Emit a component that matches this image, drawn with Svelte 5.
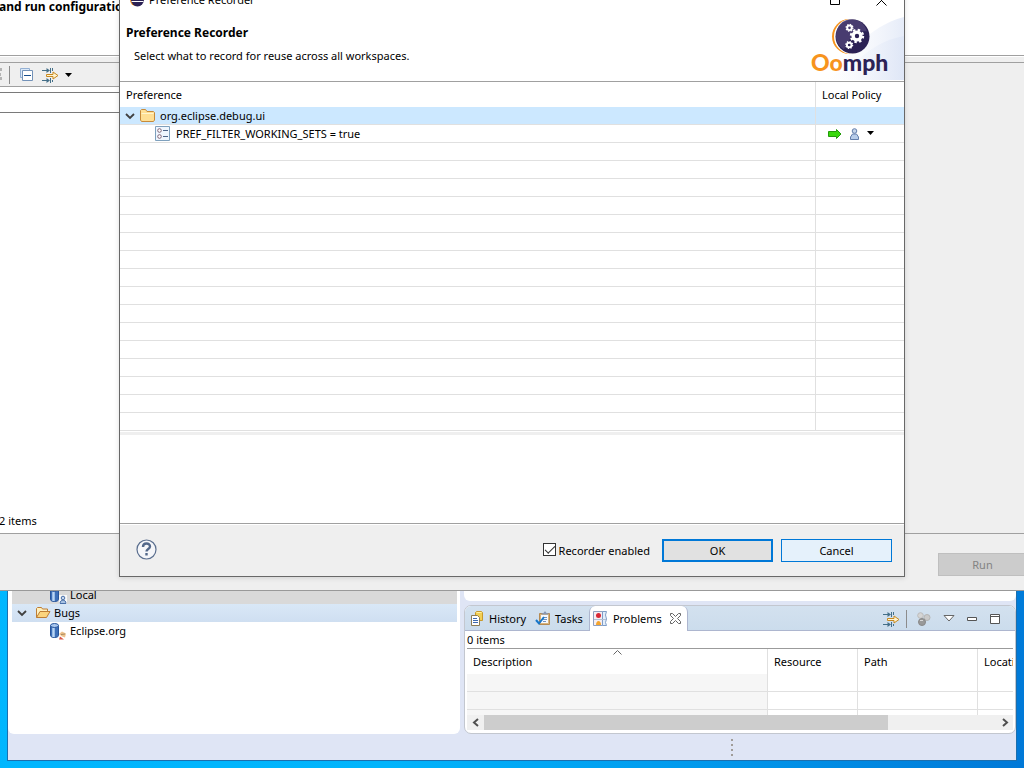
<script>
  let recorderEnabled = $state(true);
  let filter = $state('');
  const blankRows = Array.from({ length: 16 });
</script>

{#snippet chevron()}
  <svg class="chevron" width="10" height="8" viewBox="0 0 10 8" aria-hidden="true"><path d="M1 2l4 4 4-4" fill="none" stroke="#404040" stroke-width="1.8" /></svg>
{/snippet}

{#snippet flow()}
  <svg width="17" height="16" viewBox="0 0 17 16" aria-hidden="true">
    <path d="M0 3.500h6M0 13.500h6M8.500 1v5M8.500 11v5M10.500 1v3M10.500 13v2" fill="none" stroke="#446f88" />
    <path d="M4.500 1l3.500 2.500L4.500 6zM4.500 11l3.500 2.500L4.500 16z" fill="#446f88" />
    <path d="M4.500 7.500h6.500v-2.500l5 3.500-5 3.500v-2.500H4.500z" fill="#fff3cf" stroke="#c8891f" />
  </svg>
{/snippet}

{#snippet repository(kind)}
  <svg width="17" height="17" viewBox="0 0 17 17" aria-hidden="true">
    <path d="M.5 2.500v10c0 1.300 2 2 4 2s4-.7 4-2v-10" fill="#3d6fb8" stroke="#27549b" />
    <path d="M3.500 4v10" stroke="#b9d5f5" stroke-width="2.500" />
    <ellipse cx="4.500" cy="2.500" rx="4" ry="2" fill="#a9c7ee" stroke="#27549b" />
    {#if kind === 'local'}
      <path d="M9 8h8v9H9z" fill="#fff" opacity=".8" />
      <circle cx="13" cy="11" r="1.800" fill="#c8d9ef" stroke="#496fa8" />
      <path d="M10 16.500c0-4.500 6-4.500 6 0z" fill="#a9c3e4" stroke="#496fa8" />
    {:else}
      <path d="M9 11l3-2.500 4 2-1 4-3-1z" fill="#eec28c" />
      <path d="M11 11.500l4-.5" stroke="#a58a60" />
      <path d="M9 16.500l1-3 4 3z" fill="#d9584a" />
    {/if}
  </svg>
{/snippet}

<div class="desktop">
  <main class="workbench">
    <div class="views">
      <section class="repositories" aria-label="Task Repositories">
        <ul>
          <li class="leaf current">{@render repository('local')}<span>Local</span></li>
          <li class="group">
            {@render chevron()}
            <svg class="open-folder" width="16" height="14" viewBox="0 0 16 14" aria-hidden="true">
              <path d="M1.500 11.500v-9l1-1h4l1 1.500h5v3" fill="#fff0bd" stroke="#bd7d35" />
              <path d="M1.500 11.500l3.500-6h10l-3.500 6z" fill="#fbd47d" stroke="#bd7d35" />
            </svg>
            <span>Bugs</span>
          </li>
          <li class="leaf">{@render repository('eclipse')}<span>Eclipse.org</span></li>
        </ul>
      </section>

      <div class="right-views">
        <div class="editor"></div>
        <section class="problems" aria-label="Problems view">
          <div class="tabs">
            <button class="tab history">
              <svg width="13" height="15" viewBox="0 0 13 15" aria-hidden="true">
                <path d="M4.500 1.500l1-1h5l1 1v8h-7z" fill="#f2cf55" stroke="#c99a2c" /><path d="M5.500 1.500h5" stroke="#fff0a0" />
                <path d="M.5 4.500h6l2 2v8h-8z" fill="#fff" stroke="#8b7c55" /><path d="M2 7.500h4M2 9.500h5M2 11.500h5" stroke="#3c69b0" />
              </svg>
              History
            </button>
            <button class="tab tasks">
              <svg width="16" height="15" viewBox="0 0 16 15" aria-hidden="true">
                <path d="M4.500 2.500h10v11h-10z" fill="#d9b47c" stroke="#b58b52" />
                <path d="M6 4h7v8H6z" fill="#f5f9ff" /><path d="M6.500 3.500v-1l2-.5 1-1.500h1l1 1.500 2 .5v1z" fill="#8898b5" />
                <path d="M8 6.500h4M8 8.500h4M8 10.500h3" stroke="#7492bd" />
                <path d="M1 9l3 3.500L9 6" fill="none" stroke="#1676c9" stroke-width="2" />
              </svg>
              Tasks
            </button>
            <button class="tab active">
              <svg width="15" height="15" viewBox="0 0 15 15" aria-hidden="true">
                <path d="M.5.5h9v14h-9z" fill="#f6eef2" stroke="#8ea0c0" /><path d="M9.500.5h4l-1 3.500 1 4-1 3.500 1 3h-4z" fill="#e3eefa" stroke="#7f9dc6" />
                <circle cx="5.500" cy="4.500" r="2.500" fill="#d92836" /><path d="M1 8.500h12" stroke="#b3bfd4" />
                <path d="M3 14c0-5.500 5-5.500 5 0z" fill="#f5a52c" />
              </svg>
              Problems
              <svg class="close" width="11" height="11" viewBox="0 0 11 11" aria-hidden="true"><path d="M.5.5h2l3 3 3-3h2v2l-3 3 3 3v2h-2l-3-3-3 3h-2v-2l3-3-3-3z" fill="#fff" stroke="#666" /></svg>
            </button>
            <div class="view-tools">
              <button aria-label="Filters">{@render flow()}</button>
              <i class="separator"></i>
              <button class="balls" aria-label="Focus on active task">
                <svg width="14" height="14" viewBox="0 0 14 14" aria-hidden="true"><circle cx="3.500" cy="3.500" r="2.800" fill="#d5d5d5" stroke="#bbb" /><circle cx="10" cy="5.500" r="3" fill="#cacaca" stroke="#b4b4b4" /><circle cx="5" cy="10" r="3.500" fill="#999" stroke="#888" /><path d="M3 8.500h3" stroke="#d8d8d8" /></svg>
              </button>
              <button class="menu" aria-label="View menu"><svg width="12" height="7" viewBox="0 0 12 7" aria-hidden="true"><path d="M1 .5h10l-5 5.500z" fill="#fff" stroke="#666" /></svg></button>
              <button class="minimize" aria-label="Minimize"><svg width="10" height="4" viewBox="0 0 10 4" aria-hidden="true"><path d="M.5.5h9v3h-9z" fill="#fff" stroke="#555" /></svg></button>
              <button class="maximize" aria-label="Maximize"><svg width="10" height="10" viewBox="0 0 10 10" aria-hidden="true"><path d="M.5.5h9v9h-9zM.5 2.500h9" fill="#fff" stroke="#555" /></svg></button>
            </div>
          </div>
          <div class="problem-body">
            <p>0 items</p>
            <div class="problem-table">
              <table>
                <colgroup><col class="c1" /><col class="c2" /><col class="c3" /><col class="c4" /></colgroup>
                <thead>
                  <tr>
                    <th><svg class="sort" width="9" height="5" viewBox="0 0 9 5" aria-hidden="true"><path d="M.5 4.500l4-4 4 4" fill="none" stroke="#666" /></svg>Description</th>
                    <th>Resource</th><th>Path</th><th>Location</th>
                  </tr>
                </thead>
                <tbody>
                  {#each [1, 2, 3] as row (row)}<tr><td></td><td></td><td></td><td></td></tr>{/each}
                </tbody>
              </table>
            </div>
            <div class="scrollbar">
              <button aria-label="Scroll left"><svg width="8" height="9" viewBox="0 0 8 9" aria-hidden="true"><path d="M6 1L2 4.500 6 8" fill="none" stroke="#505050" stroke-width="2" /></svg></button>
              <div class="track"><div class="thumb"></div></div>
              <button aria-label="Scroll right"><svg width="8" height="9" viewBox="0 0 8 9" aria-hidden="true"><path d="M2 1l4 3.500L2 8" fill="none" stroke="#505050" stroke-width="2" /></svg></button>
            </div>
          </div>
        </section>
      </div>
    </div>
    <footer class="trim"><span class="grip"><i></i><i></i><i></i><i></i></span></footer>
  </main>

  <section class="run-window" aria-label="Run Configurations">
    <header><h2>and run configurations</h2></header>
    <div class="run-body">
      <div class="configurations">
        <div class="toolbar">
          <svg width="3" height="13" viewBox="0 0 3 13" aria-hidden="true"><path d="M0 0h2v3H0zM0 5h1v3H0zM0 9h2v3H0z" fill="#b4b4b4" /></svg>
          <i class="separator"></i>
          <button class="collapse" aria-label="Collapse All"><svg width="13" height="13" viewBox="0 0 13 13" aria-hidden="true"><path d="M.5.5h9v9h-9z" fill="#dbe9f8" stroke="#94b0d3" /><path d="M2.500 2.500h10v10h-10z" fill="#fff" stroke="#7392b8" /><path d="M4 7.500h7" stroke="#194f8f" /></svg></button>
          <button class="filter-menu" aria-label="Filter">{@render flow()}<svg width="7" height="4" viewBox="0 0 7 4" aria-hidden="true"><path d="M0 0h7L3.500 4z" /></svg></button>
        </div>
        <input class="filter" type="text" aria-label="Filter text" bind:value={filter} />
        <p>2 items</p>
      </div>
    </div>
    <div class="run-actions"><button disabled>Run</button></div>
  </section>

  <div class="recorder" role="dialog" aria-labelledby="recorder-title">
    <div class="titlebar">
      <svg width="14" height="14" viewBox="0 0 14 14" aria-hidden="true"><circle cx="6" cy="7" r="6" fill="#f7941e" /><circle cx="7.500" cy="7" r="6.500" fill="#2c2255" /><path d="M1.500 6h12M1.500 8.500h12" stroke="#fff" /></svg>
      <span>Preference Recorder</span>
      <button class="max" aria-label="Maximize window"><svg width="10" height="10" viewBox="0 0 10 10" aria-hidden="true"><path d="M.5.5h9v9h-9z" fill="none" stroke="#000" /></svg></button>
      <button class="x" aria-label="Close window"><svg width="11" height="11" viewBox="0 0 11 11" aria-hidden="true"><path d="M.5.5l10 10M10.500.5l-10 10" stroke="#000" /></svg></button>
    </div>
    <header class="banner">
      <div>
        <h1 id="recorder-title">Preference Recorder</h1>
        <p>Select what to record for reuse across all workspaces.</p>
      </div>
      <svg class="logo" width="104" height="65" viewBox="0 0 104 65" role="img" aria-label="Oomph">
        <defs>
          <linearGradient id="wave" x1="0" x2="1"><stop offset="0" stop-color="#fff" stop-opacity="0" /><stop offset="1" stop-color="#dde5f6" /></linearGradient>
        </defs>
        <path d="M20 65C52 40 66 12 104 2v63z" fill="url(#wave)" opacity=".75" />
        <path d="M20 65C58 56 62 29 104 21v44z" fill="url(#wave)" opacity=".8" />
        <circle cx="49.500" cy="21.500" r="17.500" fill="#f7941e" />
        <circle cx="51.500" cy="21.500" r="17.500" fill="#fff" />
        <circle cx="52.500" cy="21.500" r="17" fill="#2c2255" />
        <path d="M36 21.500c0-22 27-22 31-5-13-2-18 8-23 18-5-3-8-8-8-13z" fill="#51457a" opacity=".75" />
        <g fill="none" stroke="#fff">
          <circle cx="57" cy="21" r="3.900" stroke-width="3.400" /><circle cx="57" cy="21" r="6" stroke-width="2.400" stroke-dasharray="2.356 2.356" />
          <circle cx="49.500" cy="12.800" r="2.300" stroke-width="1.900" /><circle cx="49.500" cy="12.800" r="3.400" stroke-width="1.300" stroke-dasharray="1.330 1.330" />
          <circle cx="49.200" cy="30" r="2.300" stroke-width="1.900" /><circle cx="49.200" cy="30" r="3.400" stroke-width="1.300" stroke-dasharray="1.330 1.330" />
        </g>
        <text x="11" y="56" class="wordmark"><tspan fill="#f7941e">Oo</tspan><tspan fill="#2c2255">mph</tspan></text>
      </svg>
    </header>

    <table class="preferences">
      <colgroup><col /><col class="policy" /></colgroup>
      <thead><tr><th>Preference</th><th>Local Policy</th></tr></thead>
      <tbody>
        <tr class="selected">
          <td><div class="cell parent">{@render chevron()}
            <svg width="15" height="13" viewBox="0 0 15 13" aria-hidden="true"><path d="M.5 11V1.500l1-1h4l1.500 2h6.500l1 1V11l-1 1.500h-12z" fill="#ffdf94" stroke="#c68a3a" /><path d="M1.500 4.500h12" stroke="#fff5cd" /></svg>
            <span>org.eclipse.debug.ui</span></div></td>
          <td></td>
        </tr>
        <tr>
          <td><div class="cell child">
            <svg width="15" height="15" viewBox="0 0 15 15" aria-hidden="true"><path d="M.5.5h14v14H.5z" fill="#eff6fe" stroke="#7ea0bd" /><path d="M8 4.500h5M8 10.500h5" stroke="#4d6488" /><circle cx="4.500" cy="4.500" r="1.800" fill="#fff" stroke="#806477" /><circle cx="4.500" cy="10.500" r="1.800" fill="#fff" stroke="#806477" /></svg>
            <span>PREF_FILTER_WORKING_SETS = true</span></div></td>
          <td><div class="cell policy-icons">
            <svg width="14" height="10" viewBox="0 0 14 10" aria-hidden="true"><path d="M.5 2.500h8v-2l4.500 4.500-4.500 4.500v-2h-8z" fill="#38d80b" stroke="#239a0a" /></svg>
            <svg width="9" height="12" viewBox="0 0 9 12" aria-hidden="true"><path d="M.5 11.500V9l2-3h4l2 3v2.500z" fill="#b8cdea" stroke="#647fac" /><circle cx="4.500" cy="3" r="2.300" fill="#c5d5eb" stroke="#647fac" /></svg>
            <svg class="drop" width="7" height="4" viewBox="0 0 7 4" aria-hidden="true"><path d="M0 0h7L3.500 4z" /></svg>
          </div></td>
        </tr>
        {#each blankRows as _, i (i)}<tr><td></td><td></td></tr>{/each}
      </tbody>
    </table>
    <div class="sash"></div>
    <div class="details"></div>
    <footer class="actions">
      <button class="help" aria-label="Help"><svg width="21" height="21" viewBox="0 0 21 21" aria-hidden="true"><circle cx="10.500" cy="10.500" r="9.500" fill="#f5f6f9" stroke="#5b6f8f" stroke-width="1.200" /><path d="M7 8c0-4.500 7-4.500 7-.5 0 2.500-3.500 2.500-3.500 5M10.500 14v2.500" fill="none" stroke="#53688a" stroke-width="2.400" /></svg></button>
      <input id="recorder-enabled" type="checkbox" bind:checked={recorderEnabled} />
      <label for="recorder-enabled">Recorder enabled</label>
      <button class="push default">OK</button>
      <button class="push hover">Cancel</button>
    </footer>
  </div>
</div>

<style>
  :global(body) { margin: 0; overflow: hidden; }
  .desktop, .desktop * { box-sizing: border-box; }
  .desktop {
    position: relative; display: flex; min-height: 100vh; padding: 0 7px 7px; overflow: hidden;
    background: linear-gradient(100deg, #00b7ff, #00b4fc 45%, #009bee 70%, #0078d7);
    color: #000; font: 11px/16px "Noto Sans", "Open Sans", sans-serif;
  }
  svg { display: block; flex: none; }
  h1, h2, p, ul { margin: 0; padding: 0; }
  h1, h2 { font-size: 12px; line-height: 16px; font-weight: 700; white-space: nowrap; }
  button { margin: 0; padding: 0; border: 0; background: none; color: inherit; font: inherit; }
  table { border-collapse: separate; border-spacing: 0; table-layout: fixed; width: 100%; }
  th { font-weight: 400; text-align: left; white-space: nowrap; }
  .separator { width: 1px; height: 18px; background: #8c8c8c; }

  .workbench { flex: 1; min-width: 0; display: flex; flex-direction: column; background: #dfe5f5; border: 1px solid #1c6fae; border-top: 0; }
  .views { flex: 1; min-height: 0; display: flex; gap: 4px; }
  .repositories { flex: 445 1 0; min-width: 0; display: flex; flex-direction: column; justify-content: flex-end; padding: 0 3px 94px 4px; background: #fff; border-radius: 0 0 6px 6px; }
  ul { list-style: none; }
  li { display: flex; align-items: center; height: 18px; }
  .leaf { padding-left: 38px; gap: 3px; }
  .current { background: #d9d9d9; }
  .group { padding-left: 5px; gap: 8px; background: linear-gradient(#d9e8f7, #cfdff1); }
  .open-folder { margin-right: -5px; }
  .right-views { flex: 552 1 0; min-width: 0; display: flex; flex-direction: column; gap: 4px; }
  .editor { flex: 1; background: #fff; border-radius: 0 0 6px 6px; }
  .problems { background: #fff; border: 1px solid #c3c7cf; border-radius: 7px; overflow: hidden; }
  .tabs { display: flex; height: 25px; background: linear-gradient(#d3e1ef, #cbdcec); box-shadow: inset 0 -1px #adb6cf; }
  .tab { display: flex; align-items: center; gap: 5px; white-space: nowrap; }
  .history { padding-left: 6px; }
  .tasks { padding: 0 6px 0 9px; gap: 4px; }
  .active { padding: 0 6px 0 3px; border: 1px solid #adb6cf; border-width: 0 1px; border-radius: 6px 6px 0 0; background: #fff; }
  .close { margin-left: 3px; }
  .view-tools { flex: 1; display: flex; justify-content: flex-end; align-items: center; padding-right: 15px; }
  .view-tools .separator { margin: 0 10px 0 6px; }
  .menu, .minimize { height: 11px; }
  .menu { margin: 0 12px; }
  .maximize { margin-left: 13px; }
  .problem-body { padding: 1px 2px 3px; }
  .problem-table { height: 67px; overflow: hidden; border-top: 1px solid #9b9b9b; }
  .c1 { width: 300px; } .c2 { width: 90px; } .c3 { width: 120px; }
  .problem-table th { position: relative; height: 25px; padding: 1px 0 0 6px; }
  .problem-table td { height: 18px; padding: 0; border-bottom: 1px solid #e0e0e0; }
  .problem-table th + th, .problem-table td + td { border-left: 1px solid #e0e0e0; }
  .problem-table th:last-child { overflow: hidden; }
  .problem-table td:first-child { background: #f6f6f6; }
  .sort { position: absolute; top: 1px; left: 50%; margin-left: -4px; }
  .scrollbar { display: flex; height: 15px; background: #f0f0f0; }
  .scrollbar button { flex: none; width: 17px; display: grid; place-items: center; }
  .track { flex: 1; }
  .thumb { width: 79%; height: 100%; background: #cdcdcd; }
  .trim { height: 26px; display: flex; align-items: center; justify-content: center; padding-left: 440px; }
  .grip { display: grid; gap: 3px; }
  .grip i { width: 2px; height: 2px; background: #a09c98; }

  .run-window { position: absolute; inset: 0 0 177px; display: flex; flex-direction: column; background: #efefef; border-bottom: 1px solid #999; }
  .run-window header { height: 56px; background: #fff; border-bottom: 1px solid #a0a0a0; box-shadow: 0 1px #fff; }
  .run-window h2 { margin-left: -1px; line-height: 14px; }
  .run-body { flex: 1; display: flex; margin-top: 6px; border: solid #a0a0a0; border-width: 1px 0; }
  .configurations { width: 40%; display: flex; flex-direction: column; background: #fff; }
  .toolbar { display: flex; align-items: center; height: 24px; background: #efefef; border-bottom: 1px solid #a0a0a0; }
  .toolbar .separator { margin: 0 10px 0 6px; }
  .filter-menu { display: flex; align-items: center; gap: 6px; margin-left: 9px; }
  .filter { height: 21px; margin: 5px 0 0 -2px; padding: 0 4px; border: 1px solid #7a7a7a; background: #fff; font: inherit; }
  .configurations p { margin: auto 0 4px -1px; }
  .run-actions { display: flex; justify-content: flex-end; height: 56px; padding-top: 19px; overflow: hidden; }
  .run-actions button { width: 89px; height: 23px; flex: none; margin-right: -3px; border: 1px solid #bfbfbf; background: #ccc; color: #838383; }

  .recorder { position: absolute; top: -16px; left: 119px; right: 119px; background: #fff; border: 1px solid #686868; box-shadow: 0 1px 5px #0002; }
  .titlebar { display: flex; align-items: center; height: 30px; padding: 0 17px 0 10px; gap: 5px; }
  .titlebar .max { margin-left: auto; }
  .titlebar .x { margin-left: 31px; }
  .banner { display: flex; justify-content: space-between; height: 67px; border-bottom: 1px solid #a0a0a0; }
  .banner > div { padding: 10px 0 0 6px; }
  .banner p { padding: 7px 0 0 8px; }
  .wordmark { font: 900 23px Lato, sans-serif; }
  .policy { width: 89px; }
  .preferences th { height: 25px; padding: 1px 0 0 6px; }
  .preferences td { height: 18px; padding: 0; border-bottom: 1px solid #e0e0e0; }
  .preferences th + th, .preferences td + td { border-left: 1px solid #e0e0e0; }
  .selected { background: #cce8ff; }
  .cell { display: flex; align-items: center; height: 17px; }
  .parent { padding-left: 5px; gap: 5px; }
  .child { padding-left: 35px; gap: 6px; }
  .policy-icons { padding-left: 12px; gap: 8px; }
  .drop { margin-bottom: 2px; }
  .sash { height: 3px; margin-top: 1px; background: #efefef; }
  .details { min-height: 88px; }
  .actions { display: flex; align-items: center; padding: 14px 12px; border-top: 1px solid #a0a0a0; box-shadow: inset 0 1px #fff; background: #efefef; }
  .actions { padding-top: 15px; }
  .help { margin: 0 auto 2px 4px; }
  .actions input { appearance: none; width: 13px; height: 13px; margin: 0 3px 2px 0; border: 1px solid #333; background: #fff; }
  .actions input:checked::before { content: ""; display: block; width: 9px; height: 4px; margin: 2px 0 0 1px; border: solid #333; border-width: 0 0 1px 1px; transform: rotate(-45deg); }
  .actions label { margin: 0 12px 0 0; }
  .push { width: 111px; height: 23px; background: #e1e1e1; }
  .default { border: 2px solid #0078d7; }
  .hover { margin-left: 8px; border: 1px solid #0078d7; background: #e5f1fb; }
</style>
